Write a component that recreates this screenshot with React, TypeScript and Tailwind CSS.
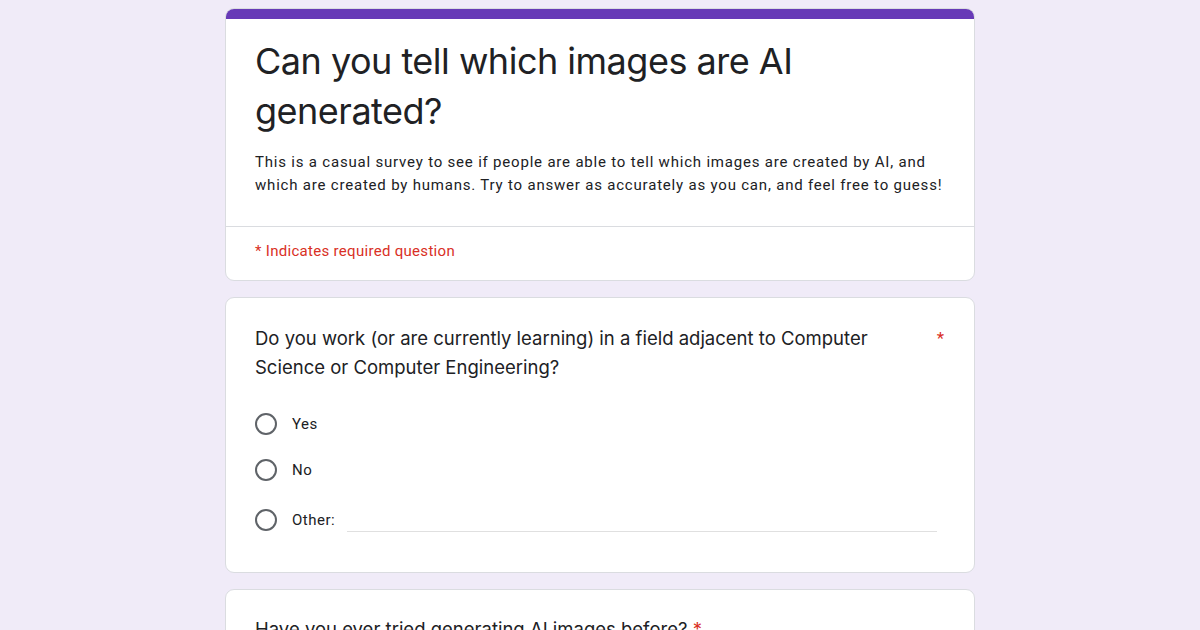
const Radio = ({ label, other }: { label: string; other?: boolean }) => {
  return (
    <div className={`flex items-center ${other ? "h-[54px]" : "h-[46px]"}`}>
      <div className="w-[22px] h-[22px] rounded-full border-2 border-[#5f6368] shrink-0" />
      <span className="ml-[15px] text-[15px] tracking-[0.5px] text-[#202124]">{label}</span>
      {other && <div className="ml-[12px] flex-1 mr-[8px] mt-[22px] border-b border-[#e0e0e0]" />}
    </div>
  );
};

export default function App() {
  return (
    <div className="h-[630px] overflow-hidden bg-[#f0ebf8] pt-[8px]" style={{ fontFamily: "Roboto, 'Liberation Sans', sans-serif" }}>
      <div className="w-[750px] mx-auto flex flex-col gap-[16px]">
        {/* header card */}
        <div className="bg-white rounded-[9px] border border-[#dadce0] overflow-hidden">
          <div className="h-[10px] bg-[#673ab7]" />
          <div className="px-[29px] pt-[17px] pb-[29px] border-b border-[#dadce0]">
            <h1 className="text-[36px] leading-[50px] text-[#202124] tracking-[-0.5px]" style={{ fontFamily: "Inter, 'Open Sans', sans-serif" }}>
              Can you tell which images are AI generated?
            </h1>
            <p className="mt-[15px] text-[15px] leading-[23px] text-[#202124] tracking-[0.8px]">
              This is a casual survey to see if people are able to tell which images are created by AI, and which are created by humans. Try to answer as accurately as you can, and feel free to guess!
            </p>
          </div>
          <div className="px-[29px] pt-[14px] pb-[19px] text-[15px] leading-[20px] tracking-[0.3px] text-[#d93025]">* Indicates required question</div>
        </div>

        {/* question 1 */}
        <div className="bg-white rounded-[9px] border border-[#dadce0] px-[29px] pt-[26px] pb-[25px]">
          <div className="flex justify-between">
            <div className="text-[18.5px] leading-[29px] text-[#202124] w-[640px]" style={{ fontFamily: "Inter, 'Open Sans', sans-serif" }}>
              Do you work (or are currently learning) in a field adjacent to Computer Science or Computer Engineering?
            </div>
            <span className="text-[#d93025] text-[17px] leading-[29px] mr-[1px]">*</span>
          </div>
          <div className="mt-[19px] flex flex-col">
            <Radio label="Yes" />
            <Radio label="No" />
            <Radio label="Other:" other />
          </div>
        </div>

        {/* question 2 */}
        <div className="bg-white rounded-[9px] border border-[#dadce0] px-[29px] pt-[25px] pb-[28px]">
          <div className="text-[18.5px] leading-[29px] text-[#202124]" style={{ fontFamily: "Inter, 'Open Sans', sans-serif" }}>
            Have you ever tried generating AI images before? <span className="text-[#d93025]">*</span>
          </div>
        </div>
      </div>
    </div>
  );
}
